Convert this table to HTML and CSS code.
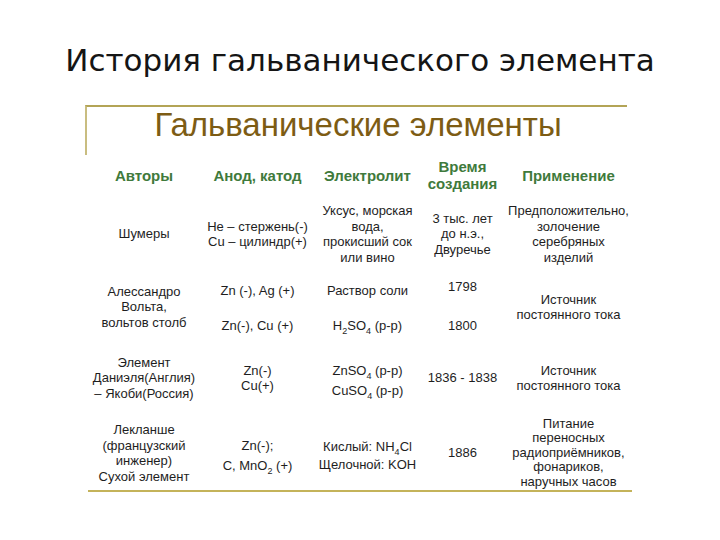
FILE: index.html
```html
<!DOCTYPE html>
<html lang="ru">
<head>
<meta charset="utf-8">
<link rel="stylesheet" href="styles.css">
</head>
<body>
<h1 class="title">История гальванического элемента</h1>
<div class="frame">
  <h2 class="subtitle">Гальванические элементы</h2>
</div>
<div class="table">
  <div class="th"><span>Авторы</span></div>
  <div class="th"><span>Анод, катод</span></div>
  <div class="th"><span>Электролит</span></div>
  <div class="th"><span>Время<br>создания</span></div>
  <div class="th"><span>Применение</span></div>

  <div class="td"><span>Шумеры</span></div>
  <div class="td"><span>Не – стержень(-)<br>Cu – цилиндр(+)</span></div>
  <div class="td"><span>Уксус, морская<br>вода,<br>прокисший сок<br>или вино</span></div>
  <div class="td"><span>3 тыс. лет<br>до н.э.,<br>Двуречье</span></div>
  <div class="td"><span>Предположительно,<br>золочение<br>серебряных<br>изделий</span></div>

  <div class="td"><span>Алессандро<br>Вольта,<br>вольтов столб</span></div>
  <div class="td split"><span>Zn (-), Ag (+)</span><span>Zn(-), Cu (+)</span></div>
  <div class="td split"><span>Раствор соли</span><span>H<sub>2</sub>SO<sub>4</sub> (р-р)</span></div>
  <div class="td split"><span class="up">1798</span><span>1800</span></div>
  <div class="td"><span>Источник<br>постоянного тока</span></div>

  <div class="td"><span>Элемент<br>Даниэля(Англия)<br>– Якоби(Россия)</span></div>
  <div class="td"><span>Zn(-)<br>Cu(+)</span></div>
  <div class="td tall low"><span>ZnSO<sub>4</sub> (р-р)<br>CuSO<sub>4</sub> (р-р)</span></div>
  <div class="td"><span>1836 - 1838</span></div>
  <div class="td"><span>Источник<br>постоянного тока</span></div>

  <div class="td"><span>Лекланше<br>(французский<br>инженер)<br>Сухой элемент</span></div>
  <div class="td tall low"><span>Zn(-);<br>C, MnO<sub>2</sub> (+)</span></div>
  <div class="td mid low"><span>Кислый: NH<sub>4</sub>Cl<br>Щелочной: KOH</span></div>
  <div class="td"><span>1886</span></div>
  <div class="td dense"><span>Питание<br>переносных<br>радиоприёмников,<br>фонариков,<br>наручных часов</span></div>
</div>
</body>
</html>
```
FILE: styles.css
```css
html, body {
  margin: 0;
  padding: 0;
  background: #ffffff;
}
body {
  width: 720px;
  height: 540px;
  overflow: hidden;
  font-family: "Liberation Sans", Arial, sans-serif;
}
.title {
  margin: 0;
  padding: 38px 0 0 0;
  height: 65px;
  box-sizing: border-box;
  text-align: center;
  font-family: "DejaVu Sans", Verdana, sans-serif;
  font-weight: normal;
  font-size: 31px;
  line-height: 44px;
  color: #151515;
}
.frame {
  margin-left: 85px;
  width: 542px;
  height: 50px;
  border-top: 2px solid #b3a456;
  border-left: 2px solid #c9bd80;
  margin-top: 40px;
  box-sizing: border-box;
}
.subtitle {
  margin: 0;
  text-align: center;
  font-family: "Liberation Sans", Arial, sans-serif;
  font-weight: normal;
  font-size: 33px;
  line-height: 36px;
  color: #7d5c14;
  padding-left: 2px;
}
.table {
  margin-left: 88px;
  width: 544px;
  display: grid;
  grid-template-columns: 112px 115px 105px 85px 127px;
  grid-template-rows: 38px 80px 66px 76px 74px;
  border-bottom: 2px solid #c4b35a;
  margin-top: 1px;
}
.th {
  display: flex;
  align-items: center;
  justify-content: center;
  text-align: center;
  font-family: "Liberation Sans", Arial, sans-serif;
  font-weight: bold;
  font-size: 15px;
  line-height: 17px;
  color: #3f7a3c;
}
.td {
  display: flex;
  align-items: center;
  justify-content: center;
  text-align: center;
  font-family: "Liberation Sans", Arial, sans-serif;
  font-size: 13px;
  line-height: 15.5px;
  color: #1e1e1e;
}
.td sub {
  font-size: 9px;
  line-height: 0;
}
.split {
  flex-direction: column;
  justify-content: space-between;
  padding: 9px 0 7px 0;
}
.up {
  margin-top: -4px;
}
.tall {
  line-height: 20px;
}
.mid {
  line-height: 18px;
}
.low {
  padding-top: 6px;
}
.dense {
  line-height: 14.5px;
}
```
